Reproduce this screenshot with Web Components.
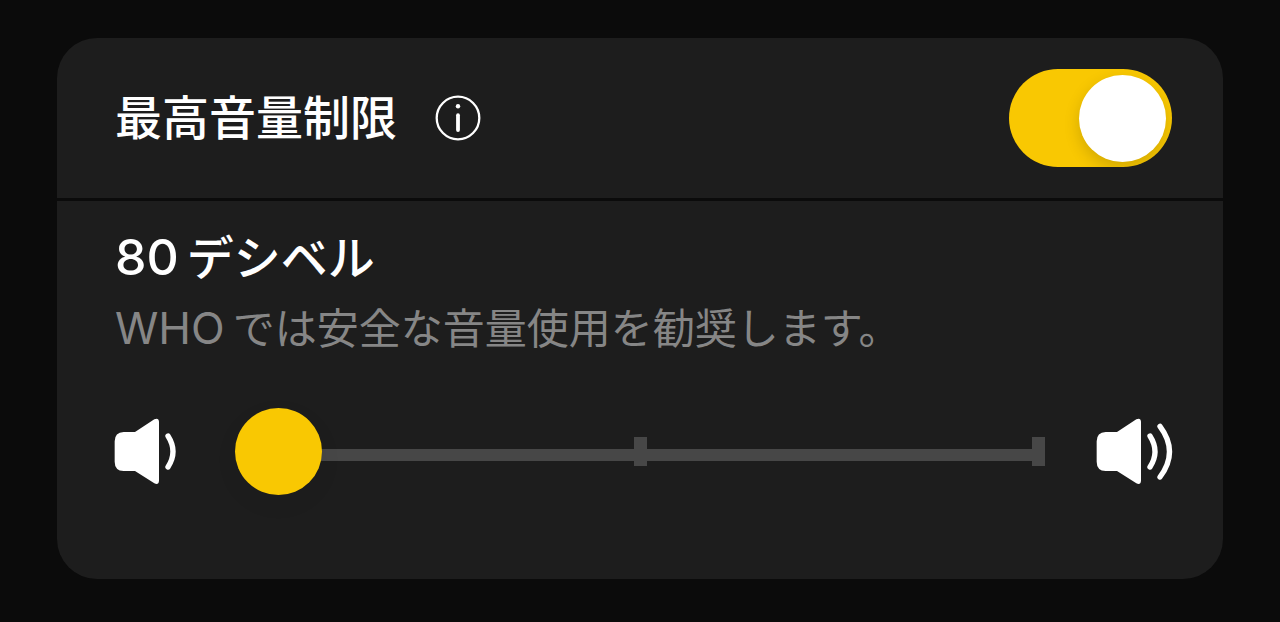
<!DOCTYPE html>
<html lang="ja">
<head>
<meta charset="utf-8">
<meta name="viewport" content="width=device-width, initial-scale=1">
<title>最高音量制限</title>
<style>
  html { background: #0b0b0b; }
  body {
    margin: 0;
    padding: 38px 57px;
    color: #fff;
    font-family: Inter, "Noto Sans CJK JP", sans-serif;
  }
</style>
</head>
<body>
<volume-limit-card></volume-limit-card>

<script>
  class ToggleSwitch extends HTMLElement {
    constructor() {
      super();
      this.attachShadow({ mode: "open" }).innerHTML = `
        <style>
          :host { display: block; flex: none; }
          input {
            appearance: none;
            display: flex;
            align-items: center;
            box-sizing: border-box;
            width: 163px;
            height: 98px;
            margin: 0;
            padding: 0 6px;
            border-radius: 49px;
            background: #3a3a3c;
            overflow: hidden;
            cursor: pointer;
          }
          input::before {
            content: "";
            width: 87px;
            height: 87px;
            border-radius: 50%;
            background: #fff;
            box-shadow: 0 6px 16px rgb(0 0 0 / 16%);
          }
          input:checked { background: #f9c802; justify-content: flex-end; }
        </style>
        <input type="checkbox" role="switch" checked>`;
      this.shadowRoot.querySelector("input").ariaLabel = this.getAttribute("label");
    }
  }
  customElements.define("toggle-switch", ToggleSwitch);

  class InfoButton extends HTMLElement {
    constructor() {
      super();
      this.attachShadow({ mode: "open" }).innerHTML = `
        <style>
          :host { display: block; flex: none; }
          button {
            display: block;
            padding: 0;
            border: 0;
            background: none;
            color: inherit;
            cursor: pointer;
          }
          svg { display: block; }
        </style>
        <button type="button" aria-label="情報">
          <svg width="46" height="46" viewBox="0 0 46 46" fill="none" stroke="currentColor" stroke-linecap="round">
            <circle cx="23" cy="23" r="21.3" stroke-width="2.3"/>
            <path d="M23 20.2V35" stroke-width="3.8"/>
            <circle cx="23" cy="11.2" r="2.2" fill="currentColor" stroke="none"/>
          </svg>
        </button>`;
    }
  }
  customElements.define("info-button", InfoButton);

  class SpeakerIcon extends HTMLElement {
    constructor() {
      super();
      const loud = this.getAttribute("level") === "high";
      this.attachShadow({ mode: "open" }).innerHTML = `
        <style>
          :host { display: block; flex: none; }
          svg { display: block; }
        </style>
        <svg width="${loud ? 77 : 62}" height="69" viewBox="0 0 ${loud ? 231 : 186} 207" fill="none"
             stroke="currentColor" stroke-width="16" stroke-linecap="round" aria-hidden="true">
          <path fill="currentColor" stroke="none"
            d="M29 45H63L121 7Q134 1 135 14V191Q134 205 121 199L63 162H29Q2 161 2 134V73Q2 46 29 45Z"/>
          <path d="M162 57Q192 104 162 150"/>
          ${loud ? '<path d="M192 28Q249 104 192 180"/>' : ""}
        </svg>`;
    }
  }
  customElements.define("speaker-icon", SpeakerIcon);

  class VolumeSlider extends HTMLElement {
    constructor() {
      super();
      this.attachShadow({ mode: "open" }).innerHTML = `
        <style>
          :host { display: block; flex: 1; min-width: 0; }
          input {
            --line: linear-gradient(#474747, #474747);
            appearance: none;
            display: block;
            width: 100%;
            height: 87px;
            margin: 0;
            background:
              var(--line) center / 13px 29px no-repeat,
              var(--line) right center / 13px 29px no-repeat,
              var(--line) right 41px / calc(100% - 43px) 12px no-repeat;
            cursor: pointer;
          }
          input::-webkit-slider-thumb {
            appearance: none;
            width: 87px;
            height: 87px;
            border: 0;
            border-radius: 50%;
            background: #f9c802;
            box-shadow: 0 8px 24px rgb(0 0 0 / 5%);
          }
        </style>
        <input type="range" min="80" max="100" step="10" value="80">`;
      this.shadowRoot.querySelector("input").ariaLabel = this.getAttribute("label");
    }
  }
  customElements.define("volume-slider", VolumeSlider);

  class SettingHeader extends HTMLElement {
    constructor() {
      super();
      this.attachShadow({ mode: "open" }).innerHTML = `
        <style>
          :host {
            display: flex;
            align-items: center;
            gap: 38px;
            height: 160px;
            padding: 0 51px 0 58px;
            border-bottom: 3px solid #0b0b0b;
          }
          h1 { margin: 0; font-size: 47px; line-height: 60px; font-weight: 500; }
          ::slotted([slot="control"]) { margin-left: auto; }
        </style>
        <h1><slot></slot></h1>
        <slot name="info"></slot>
        <slot name="control"></slot>`;
    }
  }
  customElements.define("setting-header", SettingHeader);

  class LevelSummary extends HTMLElement {
    constructor() {
      super();
      this.attachShadow({ mode: "open" }).innerHTML = `
        <style>
          :host { display: block; }
          h2, p { margin: 0; }
          h2 { font-size: 47px; line-height: 60px; font-weight: 500; }
          p { margin-top: 11px; font-size: 42px; line-height: 60px; color: #868686; }
          span { margin: 0 8px 0 1px; line-height: 1; }
          h2 span { font-size: 50px; }
          p span { font-size: 44px; }
        </style>
        <h2><span>80</span>デシベル</h2>
        <p><span>WHO</span>では安全な音量使用を勧奨します。</p>`;
    }
  }
  customElements.define("level-summary", LevelSummary);

  class VolumeLimitCard extends HTMLElement {
    constructor() {
      super();
      this.attachShadow({ mode: "open" }).innerHTML = `
        <style>
          :host {
            display: block;
            border-radius: 40px;
            background: #1d1d1d;
            overflow: hidden;
          }
          section { padding: 27px 50px 84px 57px; }
          .level {
            display: flex;
            align-items: center;
            margin-top: 49px;
          }
          volume-slider { margin: 0 51px 0 59px; }
        </style>
        <setting-header>
          最高音量制限
          <info-button slot="info"></info-button>
          <toggle-switch slot="control" label="最高音量制限"></toggle-switch>
        </setting-header>
        <section>
          <level-summary></level-summary>
          <div class="level">
            <speaker-icon level="low"></speaker-icon>
            <volume-slider label="最高音量"></volume-slider>
            <speaker-icon level="high"></speaker-icon>
          </div>
        </section>`;
    }
  }
  customElements.define("volume-limit-card", VolumeLimitCard);
</script>
</body>
</html>
